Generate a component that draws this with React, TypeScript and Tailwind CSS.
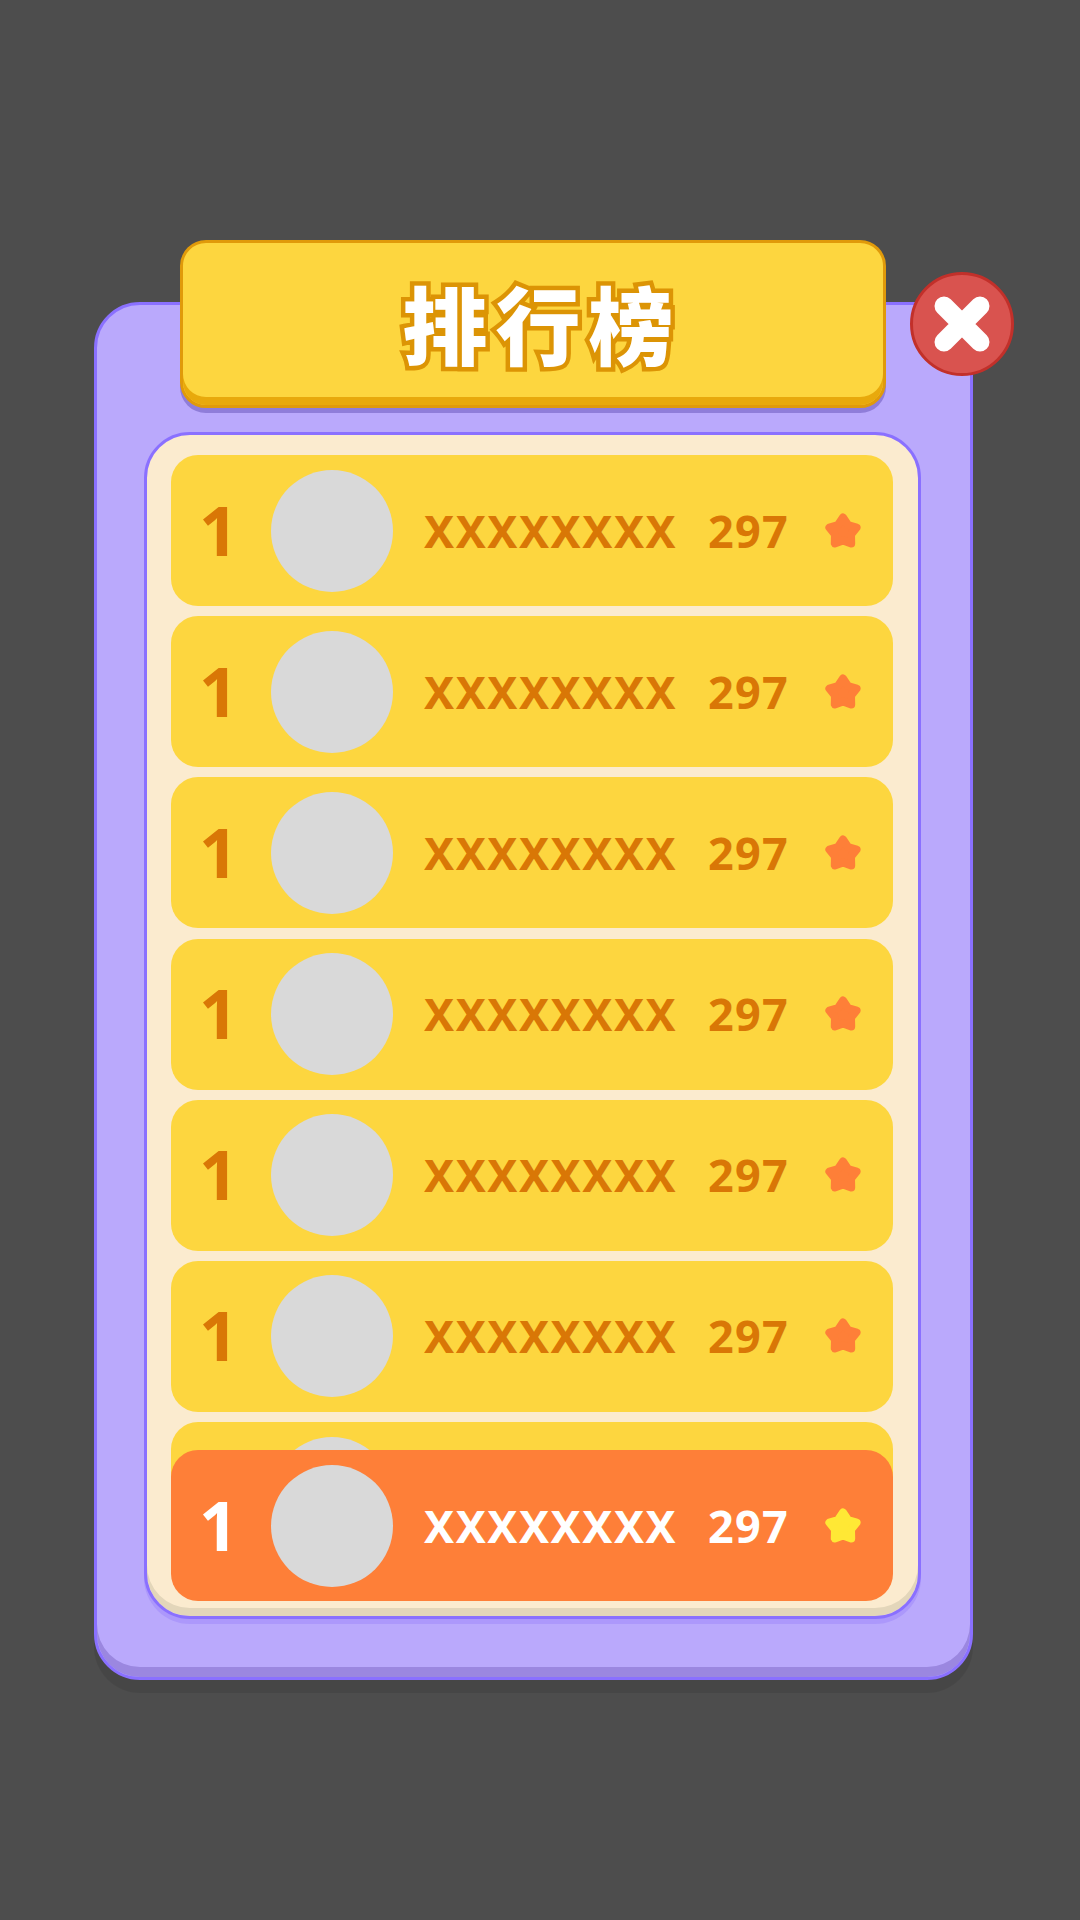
const font = "[font-family:'Noto_Sans','Noto_Sans_CJK_SC',sans-serif]";

function Star({ className }: { className: string }) {
  return (
    <svg viewBox="0 0 36 36" className={`w-[36px] h-[36px] ${className}`} fill="currentColor" stroke="currentColor" strokeWidth="8" strokeLinejoin="round">
      <path d="M18 4.5 L23 12 L31.6 14.6 L26 21.6 L26.2 30.4 L18 27.4 L9.8 30.4 L10 21.6 L4.4 14.6 L13 12 Z" />
    </svg>
  );
}

function Row({ mine = false }: { mine?: boolean }) {
  const color = mine ? "text-white" : "text-[#d97706]";
  return (
    <div className={`flex items-center h-[151px] w-full shrink-0 rounded-[27px] ${mine ? "bg-[#fe7f38]" : "bg-[#fdd63f]"} ${color} font-bold ${font}`}>
      <div className="w-[90px] pl-[5px] -mt-[2px] text-center text-[68px] leading-none">1</div>
      <div className="ml-[10px] w-[122px] h-[122px] rounded-full bg-[#d9d9d9] shrink-0" />
      <div className="ml-[31px] w-[284px] -mt-[1px] text-[45px] leading-none tracking-[1.5px] whitespace-nowrap">XXXXXXXX</div>
      <div className="w-[117px] -mt-[1px] text-[45px] leading-none tracking-[1.2px]">297</div>
      <Star className={mine ? "text-[#ffe835]" : "text-[#fe7f38]"} />
    </div>
  );
}

export default function App() {
  return (
    <div className="w-[1080px] h-[1920px] bg-[#4d4d4d] overflow-hidden pt-[302px] pl-[94px]">
      <div className="relative flex flex-col w-[879px] h-[1378px] rounded-[46px] border-[3px] border-[#8a70ff] bg-[#baa9fc] shadow-[inset_0_-10px_0_#9b87e0,0_13px_0_rgba(0,0,0,0.08)]">
        <div className="relative -mt-[65px] ml-[83px] flex items-center justify-center w-[706px] h-[168px] shrink-0 rounded-[26px] border-[3px] border-[#e09a0a] bg-[#fdd63f] shadow-[inset_0_-8px_0_#e8a90c,0_5px_0_#8f7dd9]">
          <span className="ml-[18px] -mt-[6px] text-[85px] leading-none font-black tracking-[8px] text-white [font-family:'Noto_Sans_CJK_SC',sans-serif] [-webkit-text-stroke:9px_#dc9405] [paint-order:stroke_fill]">排行榜</span>
        </div>
        <button className="absolute left-[813px] -top-[33px] flex items-center justify-center w-[104px] h-[104px] rounded-full border-[3px] border-[#c2302a] bg-[#d9534f]">
          <svg viewBox="0 0 56 56" className="w-[56px] h-[56px]" stroke="#ffffff" strokeWidth="19" strokeLinecap="round">
            <path d="M10 10 L46 46 M46 10 L10 46" />
          </svg>
        </button>
        <div className="relative mt-[24px] ml-[47px] w-[777px] h-[1187px] shrink-0 rounded-[46px] border-[3px] border-[#8a70ff] bg-[#fbebcf] shadow-[inset_0_-8px_0_#e3d6ba,0_5px_0_rgba(139,111,250,0.3)] pt-[20px] pl-[24px]">
          <div className="flex flex-col gap-[10.2px] w-[722px] h-[1146px] overflow-hidden">
            <Row />
            <Row />
            <Row />
            <Row />
            <Row />
            <Row />
            <Row />
          </div>
          <div className="absolute left-[24px] top-[1015px] w-[722px]">
            <Row mine />
          </div>
        </div>
      </div>
    </div>
  );
}
